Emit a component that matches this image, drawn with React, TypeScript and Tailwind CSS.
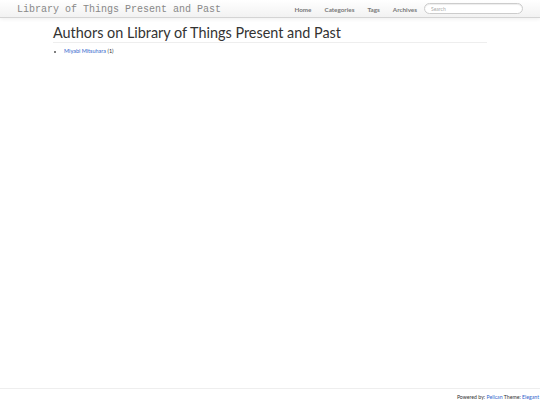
import React from "react";

const NavLink: React.FC<{ label: string }> = ({ label }) => (
  <a href="#" className="text-[#777] hover:text-[#333] font-bold">
    {label}
  </a>
);

const App: React.FC = () => {
  return (
    <div className="min-h-[405px] flex flex-col bg-white" style={{ fontFamily: "Lato, 'Open Sans', sans-serif" }}>
      <div className="h-[18px] flex items-center pt-[2px] bg-gradient-to-b from-white to-[#f2f2f2] border-b border-[#d4d4d4] shadow-[0_1px_4px_rgba(0,0,0,0.07)]">
        <a
          href="#"
          className="ml-[17px] text-[10px] leading-none text-[#888]"
          style={{ fontFamily: "'Liberation Mono', monospace" }}
        >
          Library of Things Present and Past
        </a>
        <div className="ml-auto flex items-center gap-[13px] text-[6.3px] leading-none">
          <span className="flex gap-[13px] ml-[3px] pt-[1px]">
            <NavLink label="Home" />
            <NavLink label="Categories" />
            <NavLink label="Tags" />
            <NavLink label="Archives" />
          </span>
          <input
            placeholder="Search"
            className="ml-[-6px] mr-[17px] mt-[-2px] w-[99px] h-[11px] rounded-full border border-[#ccc] bg-white px-[6px] text-[5px] placeholder:text-[#aaa] outline-none shadow-[inset_0_1px_1px_rgba(0,0,0,0.075)]"
          />
        </div>
      </div>

      <div className="flex-1 w-[434px] mx-auto">
        <h1 className="mt-[6px] text-[14.4px] leading-[17px] text-[#333] font-normal">
          Authors on Library of Things Present and Past
        </h1>
        <hr className="mt-[1px] border-t border-[#eee]" />
        <ul className="mt-[4px] ml-[11px] list-disc text-[5.5px] leading-[8px] text-[#333] marker:text-[#555]">
          <li>
            <a href="#" className="text-[#3366cc]">
              Miyabi Mitsuhara
            </a>{" "}
            (1)
          </li>
        </ul>
      </div>

      <div className="h-[17px] border-t border-[#eee] flex items-center justify-end pr-[1px] pt-[1px] text-[5.2px] text-[#333]">
        <span>
          Powered by: <a href="#" className="text-[#3366cc]">Pelican</a> Theme:{" "}
          <a href="#" className="text-[#3366cc]">Elegant</a>
        </span>
      </div>
    </div>
  );
};

export default App;
